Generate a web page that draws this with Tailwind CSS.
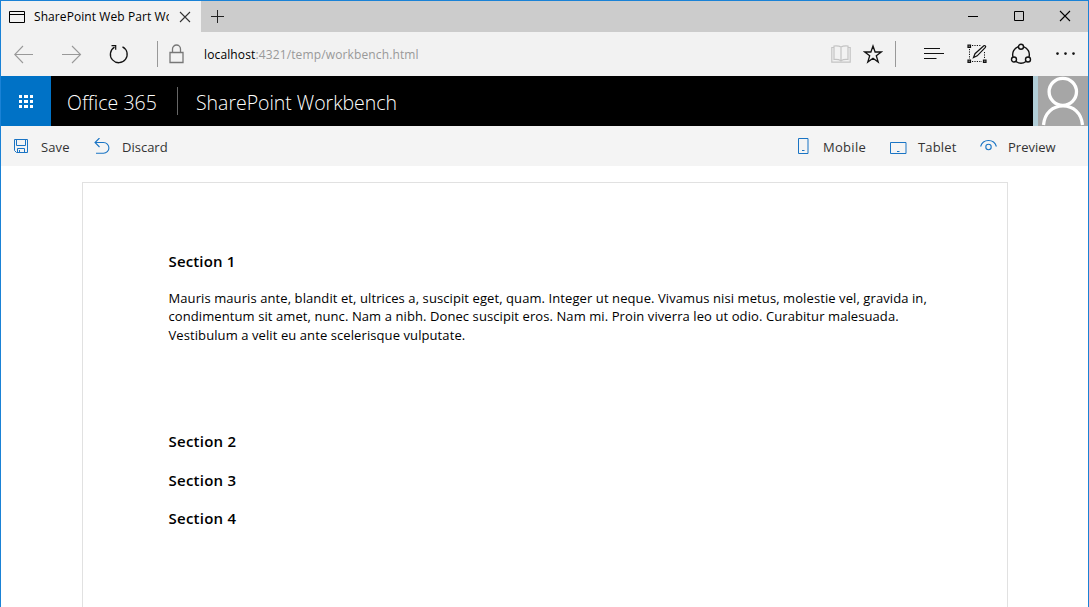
<!DOCTYPE html>
<html lang="en">
<head>
<meta charset="utf-8">
<title>SharePoint Workbench</title>
<script src="https://cdn.jsdelivr.net/npm/@tailwindcss/browser@4"></script>
</head>
<body class="font-['Open_Sans','Noto_Sans',sans-serif]">
<div class="flex h-[607px] w-[1089px] flex-col overflow-hidden border-x border-t border-[#1a82d6] bg-white text-black">

  <!-- Tab strip -->
  <div class="flex h-[31px] shrink-0 bg-[#cccccc]">
    <div class="flex w-[200px] items-center bg-[#f2f2f2] pl-2">
      <svg class="h-[14px] w-4 shrink-0" viewBox="0 0 16 14" fill="none" stroke="#000"><path d="M.5 1.500h15v11H.5zM.5 4.500h15"/></svg>
      <div class="ml-[9px] w-[135px] overflow-hidden whitespace-nowrap text-[12px] leading-[18px] tracking-[0.08px]">SharePoint Web Part Wo</div>
      <svg class="ml-[10px] h-3 w-3 shrink-0" viewBox="0 0 12 12" fill="none" stroke="#333" stroke-width="1.1"><path d="M1 1l10 10M11 1L1 11"/></svg>
    </div>
    <svg class="ml-[10px] mt-[9px] h-[13px] w-[13px]" viewBox="0 0 13 13" stroke="#222"><path d="M0 6.500h13M6.500 0v13"/></svg>
    <svg class="ml-auto mr-[15px] mt-[9px] h-3 w-[105px]" viewBox="0 0 105 12" fill="none" stroke="#000"><path d="M0 6.500h10M46.500 1.500h9v9h-9z"/><path d="M92 1l10 10M102 1l-10 10" stroke-width="1.100"/></svg>
  </div>

  <!-- Address bar -->
  <div class="flex h-[44px] shrink-0 items-center bg-[#f2f2f2]">
    <svg class="ml-[13px] h-5 w-5" viewBox="0 0 20 20" fill="none" stroke="#999" stroke-width="1.100"><path d="M19 10.500H1M9 2L.7 10.500 9 19"/></svg>
    <svg class="ml-[28px] h-5 w-5" viewBox="0 0 20 20" fill="none" stroke="#999" stroke-width="1.100"><path d="M0 10.500h18.500M10 2l8.500 8.500L10 19"/></svg>
    <svg class="ml-[27px] h-5 w-5" viewBox="0 0 20 20" fill="none" stroke="#111" stroke-width="1.300"><path d="M5.500 3.100A8.400 8.400 0 1 0 13.500 2.800"/><path d="M2.500 1.600h4.200v4.200" stroke-width="1.200"/></svg>
    <div class="ml-[28px] h-[26px] w-px bg-[#999]"></div>
    <svg class="ml-[10.500px] h-5 w-[15px]" viewBox="0 0 15 20" fill="none" stroke="#777" stroke-width="1.300"><path d="M1 8.500h13v10H1zM3.500 8V5a4 4 0 0 1 8 0v3"/></svg>
    <div class="ml-[20.500px] mt-px whitespace-nowrap text-[12px] leading-[18px] tracking-[0.13px] text-[#999]"><span class="text-black">localhost</span>:4321/temp/workbench.html</div>
    <svg class="ml-auto h-5 w-5" viewBox="0 0 20 20" fill="none" stroke="#c4c4c4" stroke-width="1.200"><path d="M10 3.500v13M10 3C8 1.800 5 1.800 3 2v13.500c3-.3 5 0 7 1.200 2-1.200 4-1.500 7-1.200V2c-2-.2-5-.2-7 1M3 3.500H.8v14.700h18.400V3.500H17"/></svg>
    <svg class="ml-[12px] h-5 w-5" viewBox="0 0 20 20" fill="none" stroke="#111" stroke-width="1.300"><path d="M10 2l2.100 6h6.200l-5 3.800 1.900 6.200-5.200-3.800L4.800 18l1.900-6.200-5-3.800h6.200z"/></svg>
    <div class="ml-[12px] h-[26px] w-px bg-[#999]"></div>
    <svg class="ml-[28px] h-5 w-5" viewBox="0 0 20 20" fill="none" stroke="#111"><path d="M0 4.500h16M0 9.500h20M0 14.500h12.500"/></svg>
    <svg class="ml-[23px] h-5 w-5" viewBox="0 0 20 20" fill="none" stroke="#111"><path d="M5 1.500h9M5 17.500h10M2.500 5v10M17.500 8v7" stroke-dasharray="1.200 1.200"/><path d="M1 1h2.500v2.500H1zM1 16h2.500v2.500H1zM16.500 16H19v2.500h-2.500z" fill="#777" stroke-width="1.200"/><path d="M6.500 13.500l1.500-3.800 8.800-7.900c1.200-.8 2.400.4 1.600 1.500l-8.200 8.500z" fill="#f2f2f2" stroke-width="1.200"/></svg>
    <svg class="ml-[23px] h-[22px] w-[22px]" viewBox="0 0 22 22" fill="none" stroke="#111" stroke-width="1.400"><path d="M8.500 3.600A8.500 8.500 0 0 0 3 14M13.500 3.600A8.500 8.500 0 0 1 19 14M6 18.500a8.500 8.500 0 0 0 10 0"/><circle cx="11" cy="3.700" r="2.500"/><circle cx="4" cy="16.500" r="2.500"/><circle cx="18" cy="16.500" r="2.500"/></svg>
    <svg class="ml-[24px] mr-3 h-5 w-5" viewBox="0 0 20 20" fill="#111"><circle cx="1.500" cy="9.600" r="1.300"/><circle cx="9.500" cy="9.600" r="1.300"/><circle cx="17.500" cy="9.600" r="1.300"/></svg>
  </div>

  <!-- Suite bar -->
  <div class="flex h-[50px] shrink-0 items-center bg-black text-white">
    <div class="flex h-full w-[50px] items-center justify-center bg-[#0072c6]">
      <div class="mt-px grid grid-cols-3 gap-[2px]">
        <i class="h-[3px] w-[3.5px] bg-white"></i><i class="h-[3px] w-[3.5px] bg-white"></i><i class="h-[3px] w-[3.5px] bg-white"></i>
        <i class="h-[3px] w-[3.5px] bg-white"></i><i class="h-[3px] w-[3.5px] bg-white"></i><i class="h-[3px] w-[3.5px] bg-white"></i>
        <i class="h-[3px] w-[3.5px] bg-white"></i><i class="h-[3px] w-[3.5px] bg-white"></i><i class="h-[3px] w-[3.5px] bg-white"></i>
      </div>
    </div>
    <div class="ml-4 mt-1 w-[90px] whitespace-nowrap text-[19.5px] font-light tracking-[0.05px]">Office 365</div>
    <div class="ml-[20px] h-[28px] w-px bg-[#666]"></div>
    <div class="ml-[18px] mt-1 whitespace-nowrap text-[19.5px] font-light tracking-[-0.03px]">SharePoint Workbench</div>
    <div class="ml-auto h-full w-[5px] bg-[#b1cdd7]"></div>
    <svg class="h-[50px] w-[50px] bg-[#a6a6a6]" viewBox="0 0 50 50" fill="none" stroke="#fff" stroke-width="3.300"><ellipse cx="24.800" cy="15.800" rx="13.700" ry="13.500"/><path d="M5.500 49C6.500 37 15 29.800 25 29.800S43.500 37 44.500 49"/></svg>
  </div>

  <!-- Command bar -->
  <div class="flex h-10 shrink-0 items-center bg-[#f4f4f4] text-[13px] leading-5 text-[#333]">
    <svg class="ml-[12px] h-4 w-4" viewBox="0 0 16 16" fill="none" stroke="#1a74c4"><path d="M1.500 1.500h13v13H3.500l-2-2zM3.500 1.500v6h9v-6M4.500 14.500v-4h7v4M6.500 14.500v-2.500"/></svg>
    <span class="ml-[12px] mt-px w-[29px] tracking-[0.1px]">Save</span>
    <svg class="ml-[24px] h-4 w-4" viewBox="0 0 16 16" fill="none" stroke="#1a74c4" stroke-width="1.100"><path d="M5.500 0L1 4.500 5.500 9M1 4.500h8.500a5.300 5.300 0 0 1 0 10.800H2"/></svg>
    <span class="ml-[12px] mt-px">Discard</span>

    <svg class="ml-auto h-4 w-[11px]" viewBox="0 0 11 16" fill="none" stroke="#1a74c4"><path d="M.5.5h9.500v15H.5zM4 12.500h2.500"/></svg>
    <span class="ml-[14px] mt-px w-[43px] whitespace-nowrap tracking-[0.3px]">Mobile</span>
    <svg class="ml-[24px] mt-[3px] h-3 w-[17px]" viewBox="0 0 17 12" fill="none" stroke="#1a74c4"><path d="M.5.5h15.500v11H.5zM7 9.500h2.500"/></svg>
    <span class="ml-[11px] mt-px w-[38px] whitespace-nowrap tracking-[0.15px]">Tablet</span>
    <svg class="ml-[24px] mb-[2px] h-3 w-[17px]" viewBox="0 0 17 12" fill="none" stroke="#1a74c4" stroke-width="1.100"><path d="M.6 7.500C1.800 3.500 4.600 1.500 8.500 1.500s6.700 2 7.900 6"/><circle cx="8.500" cy="8" r="2.700"/></svg>
    <span class="ml-[11px] mr-8 mt-px w-[48px] whitespace-nowrap">Preview</span>
  </div>

  <!-- Canvas -->
  <div class="ml-[81px] mr-[80px] mt-4 flex-1 border-x border-t border-[#e1e1e1] pl-[85.5px] pt-[68px]">
    <div class="text-[15px] font-semibold leading-[20px] tracking-[0.15px]">Section 1</div>
    <div class="mt-[18px] whitespace-nowrap text-[13px] leading-[18.400px] tracking-[0.088px]">
      <div>Mauris mauris ante, blandit et, ultrices a, suscipit eget, quam. Integer ut neque. Vivamus nisi metus, molestie vel, gravida in,</div>
      <div>condimentum sit amet, nunc. Nam a nibh. Donec suscipit eros. Nam mi. Proin viverra leo ut odio. Curabitur malesuada.</div>
      <div>Vestibulum a velit eu ante scelerisque vulputate.</div>
    </div>
    <div class="mt-[86.300px] text-[15px] font-semibold leading-[20px] tracking-[0.25px]">
      <div>Section 2</div>
      <div class="mt-[19px]">Section 3</div>
      <div class="mt-[18px]">Section 4</div>
    </div>
  </div>
</div>
</body>
</html>
